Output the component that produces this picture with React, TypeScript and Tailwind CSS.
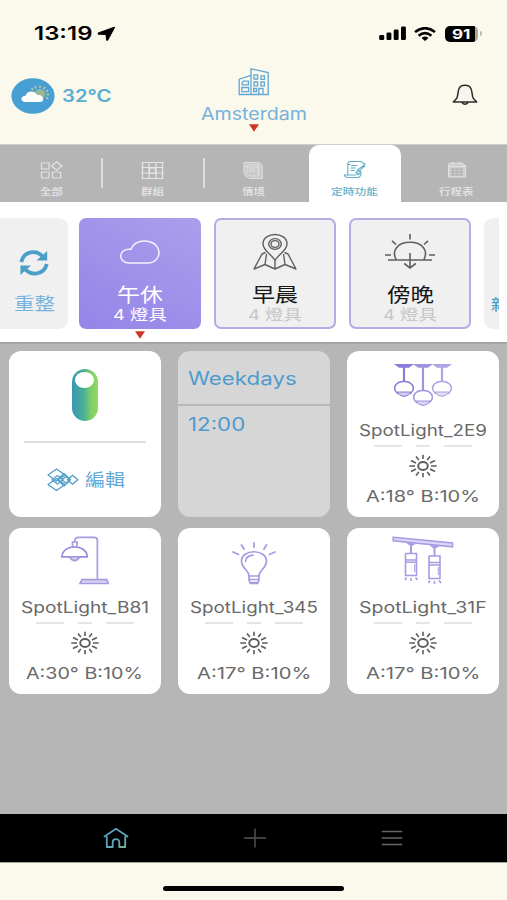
import { useLayoutEffect, useRef, type ReactNode } from 'react';

/** Single line of text stretched horizontally to a fixed width. */
function Fit({ w, className = '', children }: { w: number; className?: string; children: ReactNode }) {
  const inner = useRef<HTMLSpanElement>(null);
  useLayoutEffect(() => {
    const el = inner.current;
    if (el && el.offsetWidth) el.style.transform = `scaleX(${w / el.offsetWidth})`;
  }, [w, children]);
  return (
    <div className={'shrink-0 ' + className} style={{ width: w }}>
      <span ref={inner} className="inline-block origin-left whitespace-nowrap align-top">
        {children}
      </span>
    </div>
  );
}

function RedArrow() {
  return (
    <svg width="10" height="8" viewBox="0 0 11 8" className="block">
      <path d="M0 0H11L5.5 8Z" fill="#cc3527" />
    </svg>
  );
}

function StatusBar() {
  return (
    <div className="flex h-[67px] items-center pl-[34px] pr-[25px]">
      <Fit w={58} className="h-6 text-[19px] font-semibold leading-6 text-black">13:19</Fit>
      <svg width="19" height="16" viewBox="0 0 19 16" className="ml-[5px]">
        <path d="M17.3 1.4L1.4 7.2L1.4 8L9.2 8.4L9.8 14L10.6 14Z" fill="#000" stroke="#000" strokeWidth="1.4" strokeLinejoin="round" />
      </svg>
      <svg width="28" height="15" viewBox="0 0 28 15" className="ml-auto">
        <rect x="0.2" y="9" width="5" height="5" rx="1.3" />
        <rect x="7.5" y="6.5" width="4.9" height="7.5" rx="1.3" />
        <rect x="14.7" y="3.5" width="4.9" height="10.5" rx="1.3" />
        <rect x="22" y="0.5" width="4.9" height="13.5" rx="1.3" />
      </svg>
      <svg width="22" height="14" viewBox="0 0 22 14" className="ml-[7px]" fill="none" stroke="#000" strokeWidth="2.6">
        <path d="M1 5Q11 -2.6 21 5" />
        <path d="M4.6 8.7Q11 3.6 17.4 8.7" />
        <path d="M7.5 11Q11 8.2 14.5 11L11 14Z" fill="#000" stroke="none" />
      </svg>
      <div className="ml-[9px] flex h-4 w-[33px] items-center justify-center rounded-[5px] bg-[linear-gradient(90deg,#000_0,#000_91%,#a9a89c_91%)]">
        <Fit w={19} className="h-4 text-[13.5px] font-bold leading-4 text-white">91</Fit>
      </div>
      <div className="ml-[2px] h-[5px] w-[2px] rounded-r bg-[#bdbcb2]" />
    </div>
  );
}

function Header() {
  return (
    <div className="flex h-[77px] items-start">
      <div className="flex w-[201px] items-center pl-[11px] pt-[11px]">
        <svg width="44" height="36" viewBox="0 0 44 36">
          <ellipse cx="22" cy="18" rx="21.6" ry="17.8" fill="#489fd3" />
          <g stroke="#c3c98f" strokeWidth="1.5">
            <path d="M22 12L20.5 10M25 10.5L24 8M29 10V7.6M32.5 11L34 9M35 13.5L37 12.3M35.5 16.5H38.3M35 19.5L37.3 20.8" />
          </g>
          <circle cx="28.8" cy="16.2" r="5.2" fill="#99b995" />
          <path d="M14.5 24C9 24 9.3 18 14.6 17.8C16 12.5 24 12.2 26 17C33 15.8 34.3 24 29 24Z" fill="#fff" />
        </svg>
        <Fit w={49} className="ml-[7px] h-6 text-[17px] font-semibold leading-6 text-[#58add2]">32°C</Fit>
      </div>
      <div className="flex w-[106px] flex-col items-center">
        <svg width="32" height="30" viewBox="0 0 32 30" fill="none" stroke="#60a8d6" strokeWidth="1.3">
          <path d="M1.2 27.5V12.2L13 8.5V27.5ZM13 27.5V1.8L30.2 5.5V27.5ZM1 27.5H30.5" />
          <path d="M5.2 14.2H10.4V17.8H4.2V15.6ZM3.8 20.5H10.6V24.6H3.8Z" />
          <path d="M16 7.8H19.6V12H16ZM23 8.8H26.4V12.4H23ZM16 15H19.6V18.8H16ZM23 15H26.4V18.8H23ZM15.6 21.5H18.6V24.5H15.6ZM20.8 27V21.5H25V27" />
        </svg>
        <Fit w={106} className="mt-[5px] h-6 text-[17px] leading-6 text-[#74b1db]">Amsterdam</Fit>
        <div className="-mt-[2px]"><RedArrow /></div>
      </div>
      <div className="flex flex-1 justify-end pr-[29px] pt-[17px]">
        <svg width="26" height="22" viewBox="0 0 26 22" fill="none" stroke="#2d2d2b" strokeWidth="1.5" strokeLinejoin="round">
          <path d="M1.3 18L4.8 14.2C6 12 5.8 7.6 6.8 5.2C8.6 -0.1 17.4 -0.1 19.2 5.2C20.2 7.6 20 12 21.2 14.2L24.7 18Z" fill="#f6f5ee" />
          <path d="M9.7 18.2Q13 22.4 16.3 18.2" />
        </svg>
      </div>
    </div>
  );
}

function AllIcon() {
  return (
    <svg width="23" height="19" viewBox="0 0 23 19" fill="none" stroke="#e4e4e4" strokeWidth="1.2">
      <rect x="1.5" y="2" width="7.6" height="6" rx=".5" /><rect x="1.5" y="11" width="7.6" height="6" rx=".5" />
      <rect x="12.5" y="11" width="8.2" height="6" rx=".5" /><path d="M16.7 .8L21.9 5L16.7 9.2L11.5 5Z" />
    </svg>
  );
}

function GroupIcon() {
  return (
    <svg width="23" height="19" viewBox="0 0 23 19" fill="none" stroke="#e6e6e6" strokeWidth="1.2">
      <path d="M1.5 1V18M8 1V18M15 1V18M21.5 1V18M.5 1.5H22.5M.5 6.5H22.5M.5 12H22.5M.5 17.5H22.5" />
      <rect x="8.5" y="7" width="6" height="5" fill="#b5b5b5" />
    </svg>
  );
}

function SceneIcon() {
  return (
    <svg width="22" height="19" viewBox="0 0 22 19" fill="none" stroke="#dedede" strokeWidth="1">
      <path d="M2 1.5H17L20.3 4V17.5H8L4 15.5L2 12Z" fill="#c8c8c8" />
      <path d="M5 4H16V15H8L5 12ZM2 6H16M7 8H13M7 10H13M17 2V15" />
    </svg>
  );
}

function TimerIcon() {
  return (
    <svg width="24" height="20" viewBox="0 0 24 20" fill="none" stroke="#61afc8" strokeWidth="1.1" strokeLinecap="round">
      <path d="M19.5 2.5Q19 1.5 17 1.5H7Q4.8 1.5 4.8 4.5V14.5M4.8 4.5H7M1.3 15H13M1.3 15Q2 17.5 4 17.5H15Q17.8 17 18 13" />
      <path d="M8.5 5.5H14M8 8H12.5M8 10.5H11.5" />
      <path d="M22 3.8L20 2.9M21.8 4.8L15 9.4L13.2 12.5M21.8 6L16 10.8L13.5 12.5" />
      <path d="M13 12.5Q15 17 18 12Q17 9.5 14.5 10.5" fill="#a9d3df" />
    </svg>
  );
}

function CalendarIcon() {
  return (
    <svg width="20" height="18" viewBox="0 0 20 18" fill="none" stroke="#e2e2e2" strokeWidth="1.1">
      <path d="M3 2H15L18.5 5V16H1.5V4ZM1.5 5.5H18.5" fill="#cdcdcd" />
      <path d="M6 8V14M10 8V14M14 8V14M4 8H16M4 11H16M4 14H16" stroke="#aaa" strokeWidth=".9" />
      <path d="M6 1V4M13 1V4" />
    </svg>
  );
}

function Tabs() {
  const tabs = [
    { label: '全部', w: 23, icon: <AllIcon /> },
    { label: '群組', w: 23, icon: <GroupIcon /> },
    { label: '情境', w: 23, icon: <SceneIcon /> },
    { label: '定時功能', w: 47, icon: <TimerIcon />, active: true },
    { label: '行程表', w: 35, icon: <CalendarIcon /> },
  ];
  return (
    <div className="grid h-[58px] grid-cols-5 border-t border-[#cfcecb] bg-[#b5b5b5]">
      {tabs.map((t, i) => (
        <div key={t.label} className="flex justify-center">
          <div
            className={
              'flex w-[92px] flex-col items-center pt-[15px] ' +
              (t.active ? 'rounded-t-[10px] bg-white text-[#68afc7]' : 'text-[#e6e6e6]')
            }
          >
            <div className="flex h-[20px] items-center">{t.icon}</div>
            <Fit w={t.w} className="mt-[5px] h-[14px] text-[9.5px] font-medium leading-[14px]">{t.label}</Fit>
          </div>
          {(i < 2 || i === 4) && <div className="-mr-[7px] ml-[4px] mt-[13px] h-[30px] w-[2px] shrink-0 bg-[#dedede]" />}
        </div>
      ))}
    </div>
  );
}

function RefreshIcon() {
  return (
    <svg width="30" height="26" viewBox="0 0 30 26" fill="none" stroke="#4b9fc6" strokeWidth="3.8">
      <path d="M2.2 12C5 .8 18 -.8 24.5 7.5" /><path d="M27.8 14C25 25 12 26.4 5.5 18.5" />
      <path d="M28.2 1V10.5H17.5Z M1.4 25V15.5H12Z" fill="#4b9fc6" stroke="none" />
    </svg>
  );
}

function CloudIcon() {
  return (
    <svg width="42" height="38" viewBox="0 0 42 38" fill="none" stroke="#f5f2ff" strokeWidth="1.5">
      <path d="M9.5 30C-2 29 -.5 14.5 12 16.3C16.5 4.5 35 6.5 38.5 14.5C43 23 36 30 29.5 30Z" />
    </svg>
  );
}

function MapIcon() {
  return (
    <svg width="44" height="38" viewBox="0 0 44 38" fill="none" stroke="#5f5f61" strokeWidth="1.4" strokeLinejoin="round">
      <path d="M22 27.5C19 22 10 17.5 10 11C10 -1.7 34 -1.7 34 11C34 17.5 25 22 22 27.5Z" />
      <ellipse cx="22" cy="11" rx="6.3" ry="5.4" /><ellipse cx="22" cy="11" rx="4" ry="3.4" />
      <path d="M12.5 19.5L9 21L1 36L12 31.5L22 36L32 31.5L43 36L35 21L31.5 19.5M13.5 21L12 31.5M30.5 21L32 31.5M22 27.5V36" />
    </svg>
  );
}

function SunsetIcon() {
  return (
    <svg width="52" height="38" viewBox="0 0 52 38" fill="none" stroke="#5f5f61" strokeWidth="1.6">
      <path d="M4 27H48M12.3 27C7 17 14 9.3 26 9.3C38 9.3 45 17 39.7 27M26 20V35M20.2 30.5L26 35L31.8 30.5M26 1V6.5M8 7.8L12 11.5M44 7.8L40 11.5M1 22H7M45 22H51" />
    </svg>
  );
}

function SceneCard({ icon, name, w, selected }: { icon: ReactNode; name: string; w: number; selected?: boolean }) {
  return (
    <div className="flex w-[122px] shrink-0 flex-col items-center">
      <div
        className={
          'flex h-[111px] w-full flex-col items-center rounded-[7px] ' +
          (selected
            ? 'bg-[linear-gradient(30deg,#9584e8,#ab9eec)] pt-[15px] text-white'
            : 'border-[2.5px] border-[#b9aae3] bg-[#f0f0f1] pt-[13px] text-[#171717]')
        }
      >
        {icon}
        <Fit w={w} className="mt-[12px] h-6 text-[19.5px] leading-6">{name}</Fit>
        <Fit w={54} className={'-mt-[2px] h-[20px] text-[15px] leading-[20px] ' + (selected ? 'text-white' : 'text-[#c6c6c7]')}>
          4 燈具
        </Fit>
      </div>
      {selected && <div className="mt-[2px]"><RedArrow /></div>}
    </div>
  );
}

function Scenes() {
  return (
    <div className="h-[140px] bg-white pr-2">
      <div className="flex h-full overflow-hidden pt-4">
        <div className="mr-[11px] flex h-[111px] w-[68px] shrink-0 flex-col items-center rounded-r-[9px] bg-[#f0f0f0] pt-[32px]">
          <RefreshIcon />
          <Fit w={41} className="mt-[16px] h-6 text-[17.5px] leading-6 text-[#75b3dc]">重整</Fit>
        </div>
        <div className="flex gap-[13px]">
          <SceneCard icon={<CloudIcon />} name="午休" w={46} selected />
          <SceneCard icon={<MapIcon />} name="早晨" w={46} />
          <SceneCard icon={<SunsetIcon />} name="傍晚" w={47} />
          <div className="h-[111px] w-[15px] shrink-0 overflow-hidden rounded-l-[9px] bg-[#f0f0f0] pl-[7px] pt-[75px]">
            <Fit w={17} className="h-6 text-[15px] font-medium leading-6 text-[#4d9fc5]">新</Fit>
          </div>
        </div>
      </div>
    </div>
  );
}

function PendantIcon() {
  const lamps = [
    { x: 12, y: 22, c: '#8b7cd8' },
    { x: 31, y: 31, c: '#a193df' },
    { x: 50, y: 22, c: '#afa3e3' },
  ];
  return (
    <svg width="62" height="46" viewBox="0 0 62 46">
      {lamps.map(({ x, y, c }) => (
        <g key={x} stroke={c} fill="none" strokeWidth="1.5">
          <path d={`M${x - 10} 1H${x + 10}L${x + 5} 4.8H${x - 5}Z`} fill={c} stroke="none" />
          <path d={`M${x} 4V${y - 3}`} strokeWidth="2.2" />
          <path d={`M${x - 6} ${y + 9}C${x - 13} ${y + 3} ${x - 8} ${y - 3.5} ${x} ${y - 3.5}C${x + 8} ${y - 3.5} ${x + 13} ${y + 3} ${x + 6} ${y + 9}`} />
          <path d={`M${x - 7} ${y + 7}H${x + 7}Q${x + 5} ${y + 11} ${x} ${y + 11.5}Q${x - 5} ${y + 11} ${x - 7} ${y + 7}Z`} fill={c} fillOpacity=".4" strokeWidth="1" />
        </g>
      ))}
    </svg>
  );
}

function DeskLampIcon() {
  return (
    <svg width="48" height="50" viewBox="0 0 48 50" fill="none" stroke="#a69be0" strokeWidth="1.7">
      <path d="M13.8 6V4.5Q13.8 1.3 17.5 1.3H33Q36.4 1.3 36.4 4V43.5M11.5 10.5V6H16V10.5" />
      <path d="M.9 20.8C1.5 7.5 25.5 7.5 26.3 20.8Z" stroke="#988be0" />
      <path d="M8.4 21Q13.6 28.4 18.8 21Z" fill="#d8d2f2" />
      <path d="M21 43.7H45.7L47.5 47.5H19Z" fill="#d9d4f2" />
    </svg>
  );
}

function BulbIcon() {
  return (
    <svg width="44" height="44" viewBox="0 0 44 44" fill="none" stroke="#a69be3" strokeWidth="1.7" strokeLinecap="round">
      <path d="M17 34C17 28 10 27 9.5 19.5C9 6.5 35 6.5 34.5 19.5C34 27 27 28 27 34ZM17 37.5H27M18 40.5H26M17 34V38L18.5 41.5H25.5L27 38V34" />
      <path d="M13.5 19.5Q14 13.8 21 13.2" />
      <path d="M1 10L6.5 12.5M43 10L37.5 12.5M9.5 3L12 7M34.5 3L32 7M22 1V5" strokeWidth="1.8" />
    </svg>
  );
}

function TrackIcon() {
  return (
    <svg width="62" height="50" viewBox="0 0 62 50" fill="none" stroke="#a79ce4" strokeWidth="1.6">
      <path d="M1.2 1.3L60.5 7V10.8L1.2 4.8Z" fill="#dcd7f5" />
      <path d="M15 6.5Q19 11 23 7.5M38.5 9Q42.5 13.5 46.5 10" fill="#a79ce4" />
      <path d="M19 9V17.5M42.5 11V20" strokeWidth="2" />
      <path d="M13.5 17.5H24.5V39.5H13.5ZM37 20H48V42.5H37Z" />
      <path d="M13.5 24H24.5M13.5 26.3H24.5M37 26.5H48M37 29H48" strokeWidth="1.6" />
      <path d="M22.8 28V36M46.3 31V39" strokeWidth="1" />
      <path d="M14.5 41.5L13 44M19 42V45M23.5 41.5L25.5 44M38 44.5L36.5 47M42.5 45V48M47 44.5L49 47" />
    </svg>
  );
}

function SunIcon() {
  return (
    <svg width="28" height="24" viewBox="0 0 28 24" fill="none" stroke="#5c5c5c" strokeWidth="1.9">
      <ellipse cx="14" cy="12" rx="4.8" ry="4" />
      <path d="M14 .8V5M14 19V23.2M.3 12H6M22 12H27.7M7 2.5L9.8 6M21 2.5L18.2 6M7 21.5L9.8 18M21 21.5L18.2 18M2 6.5L7 9M26 6.5L21 9M2 17.5L7 15M26 17.5L21 15" strokeWidth="1.6" />
    </svg>
  );
}

function DeviceCard({ icon, name, reading, w }: { icon: ReactNode; name: string; reading: string; w: number }) {
  return (
    <div className="flex h-[166px] flex-col items-center rounded-[12px] bg-white text-[#696969]">
      <div className="flex h-[58px] items-end justify-center">{icon}</div>
      <Fit w={128} className="mt-[9px] h-6 text-[16px] leading-6">{name}</Fit>
      <div className="mt-[3px] flex h-[2px] w-[98px] justify-between">
        <div className="w-7 bg-[#e5e5e5]" /><div className="w-[14px] bg-[#e5e5e5]" /><div className="w-7 bg-[#e5e5e5]" />
      </div>
      <div className="mt-[7px] h-6"><SunIcon /></div>
      <Fit w={w} className="mt-[6px] h-6 text-[16.5px] leading-6">{reading}</Fit>
    </div>
  );
}

function EditCard() {
  return (
    <div className="flex h-[166px] flex-col items-center rounded-[12px] bg-white pt-[18px]">
      <div className="flex h-[52px] w-[26px] justify-center rounded-full bg-[linear-gradient(90deg,#3998b4,#4bae98_45%,#7fd163_75%,#93d766)] pt-[3px]">
        <div className="h-4 w-[19px] rounded-[50%] bg-white" />
      </div>
      <div className="mt-[20px] h-[2px] w-[122px] bg-[#dedede]" />
      <div className="mt-[25px] flex items-center gap-[6px] pl-[2px]">
        <svg width="32" height="24" viewBox="0 0 32 24" fill="none" stroke="#4f9fc9" strokeWidth="1.3" strokeLinejoin="round">
          <path d="M9.5 1L18 7L9.5 13L1 7ZM9.5 10.5L18 16.5L9.5 22.5L1 16.5ZM5 11.8L10.5 7.5L16 11.8L10.5 16ZM10.5 11.8L17 5.5L23.5 11.8L17 18ZM15 11.8L19 8.5L23 11.8L19 15ZM20.5 11.8L25.5 7.3L30.8 11.8L25.5 16.3Z" />
        </svg>
        <Fit w={40} className="h-6 text-[17.5px] leading-6 text-[#65a8d6]">編輯</Fit>
      </div>
    </div>
  );
}

function ScheduleCard() {
  return (
    <div className="h-[166px] rounded-[12px] bg-[#d6d6d6] text-[#4f9bcd]">
      <div className="h-[55px] border-b-2 border-[#b8b8b8] pl-[10.5px] pt-[16px]">
        <Fit w={109} className="h-6 text-[18px] leading-6">Weekdays</Fit>
      </div>
      <Fit w={57} className="ml-[10px] mt-[7px] h-6 text-[18px] leading-6">12:00</Fit>
    </div>
  );
}

function BottomNav() {
  return (
    <div className="flex h-[48px] items-center justify-between bg-black pl-[103px] pr-[104px]">
      <svg width="26" height="22" viewBox="0 0 26 22" fill="none" strokeWidth="1.8" strokeLinecap="round" strokeLinejoin="round">
        <defs>
          <linearGradient id="home" x1="0" y1="0" x2="1" y2="1">
            <stop offset="0" stopColor="#559ac8" /><stop offset=".55" stopColor="#5ca5bd" /><stop offset="1" stopColor="#79b596" />
          </linearGradient>
        </defs>
        <path d="M1.5 9.5L13 1.8L24.5 9.5M3.8 10V20H9.7V15C9.7 11.2 16.3 11.2 16.3 15V20H22.2V10" stroke="url(#home)" />
      </svg>
      <svg width="24" height="20" viewBox="0 0 24 20" stroke="#555" strokeWidth="1.4"><path d="M1 10H23M12 .5V19.5" /></svg>
      <svg width="22" height="20" viewBox="0 0 22 20" stroke="#656565" strokeWidth="1.3"><path d="M.7 3.5H21.3M.7 10H21.3M.7 16.5H21.3" /></svg>
    </div>
  );
}

export default function App() {
  return (
    <div className="flex h-[900px] w-[507px] flex-col overflow-hidden bg-[#fbf8ec] font-['Inter','Noto_Sans_CJK_TC',sans-serif]">
      <StatusBar />
      <Header />
      <Tabs />
      <Scenes />
      <div className="flex-1 border-t-2 border-[#a6a6a6] bg-[#b6b6b6] pl-[8.5px] pt-[7px]">
        <div className="grid grid-cols-[152px_152px_152px] gap-x-[17px] gap-y-[11px]">
          <EditCard />
          <ScheduleCard />
          <DeviceCard icon={<PendantIcon />} name="SpotLight_2E9" reading="A:18° B:10%" w={114} />
          <DeviceCard icon={<DeskLampIcon />} name="SpotLight_B81" reading="A:30° B:10%" w={117} />
          <DeviceCard icon={<BulbIcon />} name="SpotLight_345" reading="A:17° B:10%" w={114} />
          <DeviceCard icon={<TrackIcon />} name="SpotLight_31F" reading="A:17° B:10%" w={114} />
        </div>
      </div>
      <BottomNav />
      <div className="flex h-[38px] justify-center border-t border-[#a5a49c] pt-[23px]">
        <div className="h-[5px] w-[181px] rounded-full bg-black" />
      </div>
    </div>
  );
}
